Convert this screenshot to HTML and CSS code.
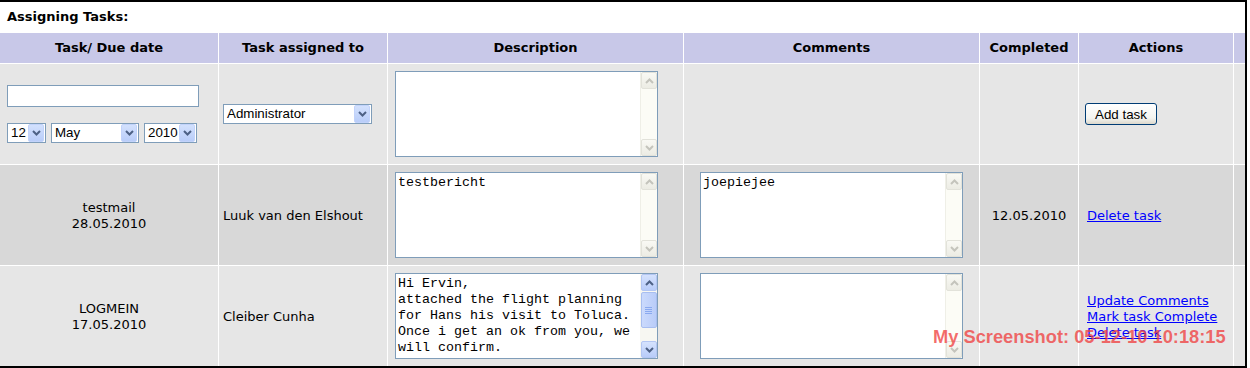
FILE: index.html
```html
<!DOCTYPE html>
<html>
<head>
<meta charset="utf-8">
<title>Assigning Tasks</title>
<link rel="stylesheet" href="styles.css">
</head>
<body>
<div class="frame">
  <div class="grid">
    <div class="title">Assigning Tasks:</div>

    <div class="th">Task/ Due date</div>
    <div class="th">Task assigned to</div>
    <div class="th">Description</div>
    <div class="th">Comments</div>
    <div class="th">Completed</div>
    <div class="th">Actions</div>
    <div class="th"></div>

    <!-- new task row -->
    <div class="td c-newdate">
      <input class="txt" type="text">
      <div class="date-sels">
        <div class="sel s-day"><span class="sel-val">12</span><span class="sel-btn"><svg viewBox="0 0 9 6"><polyline points="1,1 4.5,4.5 8,1"/></svg></span></div>
        <div class="sel s-month"><span class="sel-val">May</span><span class="sel-btn"><svg viewBox="0 0 9 6"><polyline points="1,1 4.5,4.5 8,1"/></svg></span></div>
        <div class="sel s-year"><span class="sel-val">2010</span><span class="sel-btn"><svg viewBox="0 0 9 6"><polyline points="1,1 4.5,4.5 8,1"/></svg></span></div>
      </div>
    </div>
    <div class="td c-who">
      <div class="sel s-user"><span class="sel-val">Administrator</span><span class="sel-btn"><svg viewBox="0 0 9 6"><polyline points="1,1 4.5,4.5 8,1"/></svg></span></div>
    </div>
    <div class="td c-desc">
      <div class="ta">
        <textarea class="ta-text" readonly></textarea>
        <div class="sb"><span class="sbb"><svg viewBox="0 0 9 6"><polyline points="1,5 4.5,1.5 8,5"/></svg></span><span class="sbt"></span><span class="sbb"><svg viewBox="0 0 9 6"><polyline points="1,1 4.5,4.5 8,1"/></svg></span></div>
      </div>
    </div>
    <div class="td"></div>
    <div class="td"></div>
    <div class="td c-act1"><button class="btn" type="button">Add task</button></div>
    <div class="td"></div>

    <!-- task 1 -->
    <div class="td alt center text">testmail<br>28.05.2010</div>
    <div class="td alt c-who text">Luuk van den Elshout</div>
    <div class="td alt c-desc">
      <div class="ta">
        <textarea class="ta-text" readonly>testbericht</textarea>
        <div class="sb"><span class="sbb"><svg viewBox="0 0 9 6"><polyline points="1,5 4.5,1.5 8,5"/></svg></span><span class="sbt"></span><span class="sbb"><svg viewBox="0 0 9 6"><polyline points="1,1 4.5,4.5 8,1"/></svg></span></div>
      </div>
    </div>
    <div class="td alt center">
      <div class="ta">
        <textarea class="ta-text" readonly>joepiejee</textarea>
        <div class="sb"><span class="sbb"><svg viewBox="0 0 9 6"><polyline points="1,5 4.5,1.5 8,5"/></svg></span><span class="sbt"></span><span class="sbb"><svg viewBox="0 0 9 6"><polyline points="1,1 4.5,4.5 8,1"/></svg></span></div>
      </div>
    </div>
    <div class="td alt center text">12.05.2010</div>
    <div class="td alt c-act text"><div class="links"><a href="#">Delete task</a></div></div>
    <div class="td alt"></div>

    <!-- task 2 -->
    <div class="td center text">LOGMEIN<br>17.05.2010</div>
    <div class="td c-who text">Cleiber Cunha</div>
    <div class="td c-desc">
      <div class="ta">
        <textarea class="ta-text" readonly>Hi Ervin,
attached the flight planning
for Hans his visit to Toluca.
Once i get an ok from you, we
will confirm.

Regards</textarea>
        <div class="sb on"><span class="sbb"><svg viewBox="0 0 9 6"><polyline points="1,5 4.5,1.5 8,5"/></svg></span><span class="thumb"><svg viewBox="0 0 8 7"><path d="M0 0.5H7M0 2.5H7M0 4.5H7M0 6.5H7"/></svg></span><span class="sbt"></span><span class="sbb"><svg viewBox="0 0 9 6"><polyline points="1,1 4.5,4.5 8,1"/></svg></span></div>
      </div>
    </div>
    <div class="td center">
      <div class="ta">
        <textarea class="ta-text" readonly></textarea>
        <div class="sb"><span class="sbb"><svg viewBox="0 0 9 6"><polyline points="1,5 4.5,1.5 8,5"/></svg></span><span class="sbt"></span><span class="sbb"><svg viewBox="0 0 9 6"><polyline points="1,1 4.5,4.5 8,1"/></svg></span></div>
      </div>
    </div>
    <div class="td"></div>
    <div class="td c-act text"><div class="links"><a href="#">Update Comments</a><a href="#">Mark task Complete</a><a href="#">Delete task</a></div></div>
    <div class="td"></div>
  </div>
</div>
<div class="watermark">My Screenshot: 05-12-10 10:18:15</div>
</body>
</html>
```

FILE: styles.css
```css
* { box-sizing: border-box; }

body {
  margin: 0;
  background: #fff;
  color: #000;
  font-family: "DejaVu Sans", Verdana, sans-serif;
  font-size: 13px;
  line-height: 16px;
  position: relative;
}

.frame {
  width: 1247px;
  border-top: 2px solid #000;
  border-right: 2px solid #000;
  border-bottom: 2px solid #000;
}

.grid {
  display: grid;
  grid-template-columns: 218px 168px 295px 295px 98px 154px 11px;
  grid-template-rows: 30px 30px 100px 100px 100px;
  gap: 1px;
  background: #fff;
}

.title {
  grid-column: 1 / -1;
  display: flex;
  align-items: center;
  padding-left: 7px;
  font-weight: bold;
}

.th {
  display: flex;
  align-items: center;
  justify-content: center;
  background: #c8c8e8;
  font-weight: bold;
}

.td {
  display: flex;
  align-items: center;
  background: #e6e6e6;
}
.td.alt { background: #d8d8d8; }
.td.center { justify-content: center; text-align: center; }
.td.text { padding-top: 2px; }

.c-newdate {
  flex-direction: column;
  align-items: flex-start;
  justify-content: center;
  gap: 16px;
  padding-left: 7px;
}
.c-who { padding-left: 4px; }
.c-desc { padding-left: 7px; }
.c-act1 { padding-left: 6px; }
.c-act { padding-left: 8px; }

/* text input */
.txt {
  width: 192px;
  height: 22px;
  margin: 0;
  border: 1px solid #7f9db9;
  background: #fff;
  padding: 0 3px;
}

/* selects */
.date-sels { display: flex; gap: 5px; }
.sel {
  display: flex;
  align-items: stretch;
  height: 20px;
  border: 1px solid #7f9db9;
  background: #fff;
  font-family: "Liberation Sans", Arial, sans-serif;
  font-size: 13.33px;
  line-height: 18px;
}
.sel-val { flex: 1; padding-left: 3px; white-space: nowrap; overflow: hidden; }
.sel-btn {
  width: 16px;
  margin-right: 1px;
  display: flex;
  align-items: center;
  justify-content: center;
  border-radius: 2px;
  background: linear-gradient(#d3e1fd, #b9cdf9);
  border: 1px solid #c2d3fb;
}
.sel-btn svg { width: 9px; height: 6px; fill: none; stroke: #4d6185; stroke-width: 2; }
.s-day { width: 39px; }
.s-month { width: 88px; }
.s-year { width: 53px; }
.s-user { width: 149px; }

/* textarea with XP-style scrollbar */
.ta {
  display: flex;
  width: 263px;
  height: 86px;
  border: 1px solid #7f9db9;
  background: #fff;
  text-align: left;
}
.ta-text {
  flex: 1;
  min-width: 0;
  margin: 0;
  border: 0;
  padding: 2px 1px 2px 2px;
  background: transparent;
  color: #000;
  font-family: "Liberation Mono", "Courier New", monospace;
  font-size: 13.333px;
  line-height: 16px;
  resize: none;
  overflow: hidden;
  outline: none;
}
.sb {
  width: 17px;
  display: flex;
  flex-direction: column;
  background: #fcfcf6;
  border-left: 1px solid #efefe7;
}
.sbb {
  height: 17px;
  flex: none;
  display: flex;
  align-items: center;
  justify-content: center;
  border: 1px solid #e2e2da;
  border-radius: 2px;
  background: linear-gradient(#f9f9f4, #ececE4);
}
.sbb svg { width: 9px; height: 6px; fill: none; stroke: #c4c4bc; stroke-width: 2; }
.sbt { flex: 1; }
.sb.on { background: #f7f7f2; border-left-color: #f7f7f2; }
.sb.on .sbb {
  background: linear-gradient(#d5e2fd, #b8ccf9);
  border-color: #b3c6f3;
}
.sb.on .sbb svg { stroke: #4d6185; }
.thumb {
  height: 36px;
  margin-top: 1px;
  flex: none;
  display: flex;
  align-items: center;
  justify-content: center;
  border: 1px solid #a8bef0;
  border-radius: 2px;
  background: linear-gradient(90deg, #cbdafc, #b9ccf9);
}
.thumb svg { width: 8px; height: 7px; fill: none; stroke: #8aa9ef; stroke-width: 1; }

/* button */
.btn {
  width: 72px;
  height: 22px;
  margin: 0;
  padding: 0;
  border: 1px solid #003c74;
  border-radius: 3px;
  background: linear-gradient(#ffffff, #f4f4f0 70%, #dcd8cc);
  color: #000;
  font-family: "Liberation Sans", Arial, sans-serif;
  font-size: 13.33px;
}

/* links */
.links { display: flex; flex-direction: column; }
.links a { color: #0000ff; text-decoration: underline; }

/* screenshot watermark */
.watermark {
  position: absolute;
  left: 933px;
  top: 328px;
  font-family: "Liberation Sans", Arial, sans-serif;
  font-weight: bold;
  font-size: 18.3px;
  line-height: 18px;
  color: rgba(240, 60, 60, 0.75);
  white-space: nowrap;
  pointer-events: none;
}
```
